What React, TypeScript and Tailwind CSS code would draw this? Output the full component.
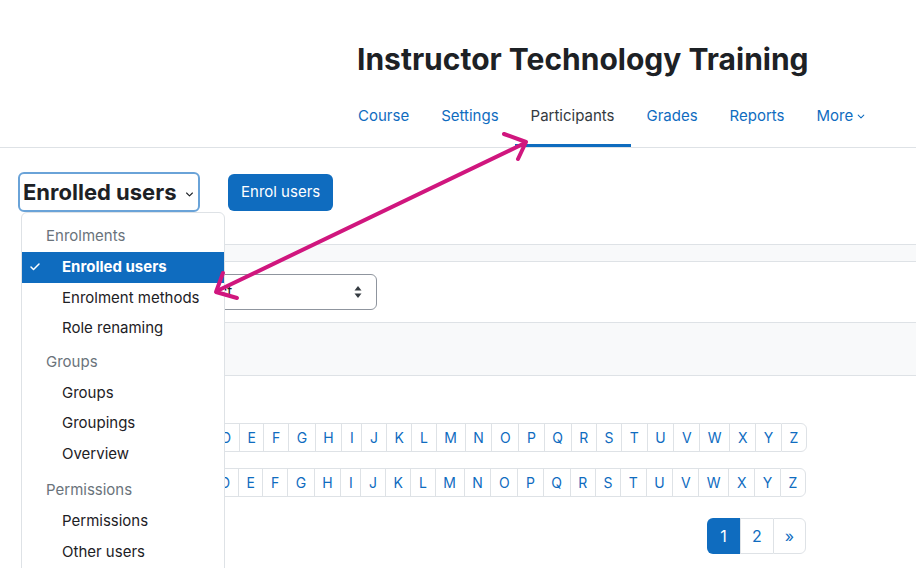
import { Check } from 'lucide-react';
import clsx from 'clsx';

const navItems = ['Course', 'Settings', 'Participants', 'Grades', 'Reports'];
const letters = 'ABCDEFGHIJKLMNOPQRSTUVWXYZ'.split('');

const menuGroups = [
  { heading: 'Enrolments', items: ['Enrolled users', 'Enrolment methods', 'Role renaming'] },
  { heading: 'Groups', items: ['Groups', 'Groupings', 'Overview'] },
  { heading: 'Permissions', items: ['Permissions', 'Other users', 'Check permissions'] },
];

function Chevron({ className }: { className?: string }) {
  return (
    <svg viewBox="0 0 10 6" className={className} fill="none" stroke="currentColor" strokeWidth="1.3" strokeLinecap="round" strokeLinejoin="round">
      <path d="M1.5 1.2 5 4.7 8.5 1.2" />
    </svg>
  );
}

function InitialsBar({ label }: { label: string }) {
  return (
    <div className="flex items-center justify-end gap-3 whitespace-nowrap">
      <span className="text-[15px] text-[#1d2125]">{label}</span>
      <ul className="flex h-[29px] text-[14px] text-[#0f6cbf]">
        {['All', ...letters].map((l, i) => (
          <li
            key={l}
            className={clsx(
              'flex items-center border-y border-l border-[#dee2e6] px-[7.65px]',
              i === 0 && 'rounded-l-md bg-[#0f6cbf] text-white',
              i === letters.length && 'rounded-r-md border-r',
            )}
          >
            {l}
          </li>
        ))}
      </ul>
    </div>
  );
}

function CourseMenu() {
  return (
    <div className="absolute left-[3px] top-[40px] z-10 w-[204px] rounded-md border border-[#dee2e6] bg-white pt-2 pb-2 text-[15px]">
      {menuGroups.map((group, gi) => (
        <div key={group.heading} className={clsx(gi === 1 && 'mt-[3px]', gi === 2 && 'mt-[6px]')}>
          <div className="flex h-[31px] items-center pl-[24px] text-[#6a737b]">{group.heading}</div>
          {group.items.map((item) => {
            const active = item === 'Enrolled users';
            return (
              <div
                key={item}
                className={clsx(
                  'relative flex h-[30.5px] items-center pl-[40px]',
                  active ? 'bg-[#0f6cbf] font-bold text-white' : 'text-[#1d2125]',
                )}
              >
                {active && <Check className="absolute left-[7px] top-1/2 h-[12px] w-[12px] -translate-y-1/2" strokeWidth={3} />}
                {item}
              </div>
            );
          })}
        </div>
      ))}
    </div>
  );
}

export default function App() {
  return (
    <div className="relative h-[568px] w-[916px] overflow-hidden bg-white font-['Inter',sans-serif] text-[#1d2125]">
      <header className="border-b border-[#dee2e6] pt-[41px]">
        <h1 className="pl-[357px] text-[30px] font-bold leading-[36px] text-[#1d2125]">
          Instructor Technology Training
        </h1>
        <nav className="mt-[28px] flex pl-[342px] text-[15px] leading-[22px]">
          {navItems.map((item) => (
            <a
              key={item}
              className={clsx(
                'border-b-[3px] px-4 pb-[17px]',
                item === 'Participants' ? 'border-[#0f6cbf] text-[#343a40]' : 'border-transparent text-[#0f6cbf]',
              )}
            >
              {item}
            </a>
          ))}
          <a className="flex items-start gap-[4px] border-b-[3px] border-transparent px-4 pb-[17px] text-[#0f6cbf]">
            More
            <Chevron className="mt-[9px] h-[5px] w-[8px]" />
          </a>
        </nav>
      </header>

      <main className="pt-[24px]">
        <div className="flex items-center gap-[28px] pl-[18px]">
          <div className="relative">
            <div className="flex h-[40px] w-[182px] items-center gap-[9px] rounded-md border-2 border-[#6aa3d8] pl-[3px]">
              <span className="text-[22px] font-bold leading-none text-[#1d2125]">Enrolled users</span>
              <Chevron className="mt-[4px] h-[5px] w-[9px] text-[#1d2125]" />
            </div>
            <CourseMenu />
          </div>
          <button className="h-[37px] rounded-md bg-[#0f6cbf] px-[13px] text-[15px] text-white">Enrol users</button>
        </div>

        <div className="pl-[24px]">
          <div className="mt-[32px] h-[18px] border-y border-[#dee2e6] bg-[#f8f9fa]" />
          <div className="mt-[12px] flex">
            <div className="ml-[153px] flex h-[36px] w-[200px] items-center justify-between rounded-md border border-[#8f959e] pl-[10px] pr-[14px] text-[15px] text-[#1d2125]">
              <span>Select</span>
              <svg viewBox="0 0 8 12" className="h-[12px] w-[8px] text-[#343a40]" fill="currentColor">
                <path d="M4 0 7.5 4.5H.5z" />
                <path d="M4 12 .5 7.5h7z" />
              </svg>
            </div>
          </div>
          <div className="mt-[12px] h-[54px] border-y border-[#dee2e6] bg-[#f8f9fa]" />
        </div>

        <div className="ml-[22px] flex flex-col overflow-hidden pr-[109px]">
          <div className="mt-[47px]">
            <InitialsBar label="First name" />
          </div>
          <div className="mt-[16px] pr-[1px]">
            <InitialsBar label="Last name" />
          </div>
          <ul className="mt-[21px] flex h-[36px] justify-end self-end pr-[1px] text-[16px]">
            <li className="flex w-[33px] items-center justify-center rounded-l-md bg-[#0f6cbf] text-white">1</li>
            <li className="flex w-[33px] items-center justify-center border-y border-l border-[#dee2e6] text-[#0f6cbf]">2</li>
            <li className="flex w-[33px] items-center justify-center rounded-r-md border border-[#dee2e6] text-[#0f6cbf]">»</li>
          </ul>
        </div>
      </main>

      <svg className="pointer-events-none absolute inset-0 z-20" width="916" height="568" viewBox="0 0 916 568" fill="none" stroke="#d0167e" strokeWidth="4" strokeLinecap="round" strokeLinejoin="round">
        <path d="M219 290 525 143" />
        <path d="M504 134 526 142 518 159" />
        <path d="M223 273 216 292 237 298" />
      </svg>
    </div>
  );
}
